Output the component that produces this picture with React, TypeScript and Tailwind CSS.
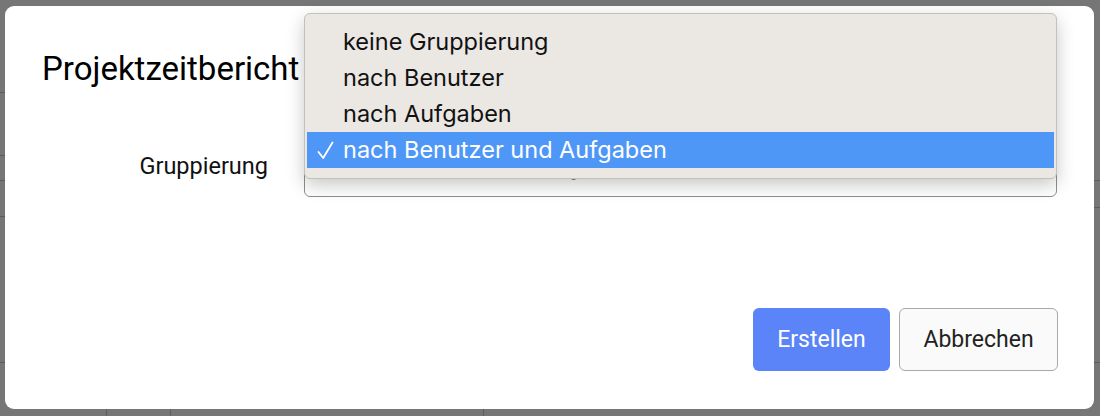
import React from "react";

const options = [
  "keine Gruppierung",
  "nach Benutzer",
  "nach Aufgaben",
  "nach Benutzer und Aufgaben",
];

function Check() {
  return (
    <svg width="17" height="19" viewBox="0 0 17 19" className="absolute left-[10px] top-[9px]">
      <path d="M1.5 11 L6.2 17 L15.5 1.5" fill="none" stroke="white" strokeWidth="1.8" strokeLinecap="round" strokeLinejoin="round" />
    </svg>
  );
}

export default function App() {
  const selected = 3;
  return (
    <div className="flex w-[1100px] h-[416px] overflow-hidden bg-[#767676] font-['Roboto',sans-serif]">
      {/* left strip of the table behind the overlay */}
      <div className="w-[5px] flex flex-col">
        <div className="h-[93px] border-b border-[#5c5c5c]" />
        <div className="h-[63px] border-b border-[#5c5c5c]" />
        <div className="h-[25px] border-b border-[#5c5c5c]" />
        <div className="h-[36px] border-b border-[#5c5c5c]" />
        <div className="h-[146px] border-b border-[#5c5c5c]" />
      </div>

      <div className="flex-1 flex flex-col pt-[6px]">
        {/* modal */}
        <div className="relative h-[403px] rounded-[9px] bg-white pl-[37px] pr-[36px] flex flex-col">
          <div className="absolute left-[1034px] top-[36px] w-[18px] h-[18px]">
            <svg width="18" height="18" viewBox="0 0 18 18">
              <path d="M1 1 L17 17 M17 1 L1 17" stroke="#333" strokeWidth="1.6" />
            </svg>
          </div>

          <h2 className="mt-[43px] text-[33px] leading-[40px] text-black">Projektzeitbericht</h2>

          <div className="mt-[46px] flex items-center gap-[36px] mr-[1px]">
            <label className="w-[226px] text-right text-[23.5px] leading-[30px] text-[#111]">Gruppierung</label>
            <div className="relative flex-1">
              <div className="h-[62px] rounded-[6px] border border-[#8f8f8f] bg-white flex items-center pl-[46px] text-[20px] text-[#111] font-['Inter',sans-serif]">
                <span className="translate-y-[2px]">nach Benutzer und Aufgaben</span>
              </div>

              {/* open native menu */}
              <div className="absolute left-0 right-0 top-[-122px] rounded-[6px] border border-[#c4c0bc] bg-[#ebe7e3] py-[10px] px-[2px] shadow-[0_6px_18px_rgba(0,0,0,0.22)] font-['Inter',sans-serif]">
                {options.map((o, i) => (
                  <div
                    key={o}
                    className={
                      i === selected
                        ? "relative h-[36px] flex items-center pl-[36px] text-[23.5px] text-white bg-[#4f97f7]"
                        : "relative h-[36px] flex items-center pl-[36px] text-[23.5px] text-[#111]"
                    }
                  >
                    {i === selected && <Check />}
                    {o}
                  </div>
                ))}
              </div>
            </div>
          </div>

          <div className="mt-auto mb-[38px] flex justify-end gap-[9px]">
            <button className="h-[63px] w-[137px] rounded-[6px] bg-[#5a84f8] text-white text-[23px] pt-[2px]">Erstellen</button>
            <button className="h-[63px] w-[159px] rounded-[6px] border border-[#a9a9a9] bg-[#fafafa] text-[#222] text-[23px] pt-[2px]">Abbrechen</button>
          </div>
        </div>

        {/* bottom strip of the table behind the overlay */}
        <div className="flex-1 flex">
          <div className="w-[102px] border-r border-[#5c5c5c]" />
          <div className="w-[64px] border-r border-[#5c5c5c]" />
          <div className="w-[313px] border-r border-[#5c5c5c]" />
        </div>
      </div>

      {/* right strip */}
      <div className="w-[6px] flex flex-col">
        <div className="h-[181px] border-b border-[#5c5c5c]" />
        <div className="h-[27px] border-b border-[#5c5c5c]" />
        <div className="h-[155px] border-b border-[#5c5c5c]" />
      </div>
    </div>
  );
}
